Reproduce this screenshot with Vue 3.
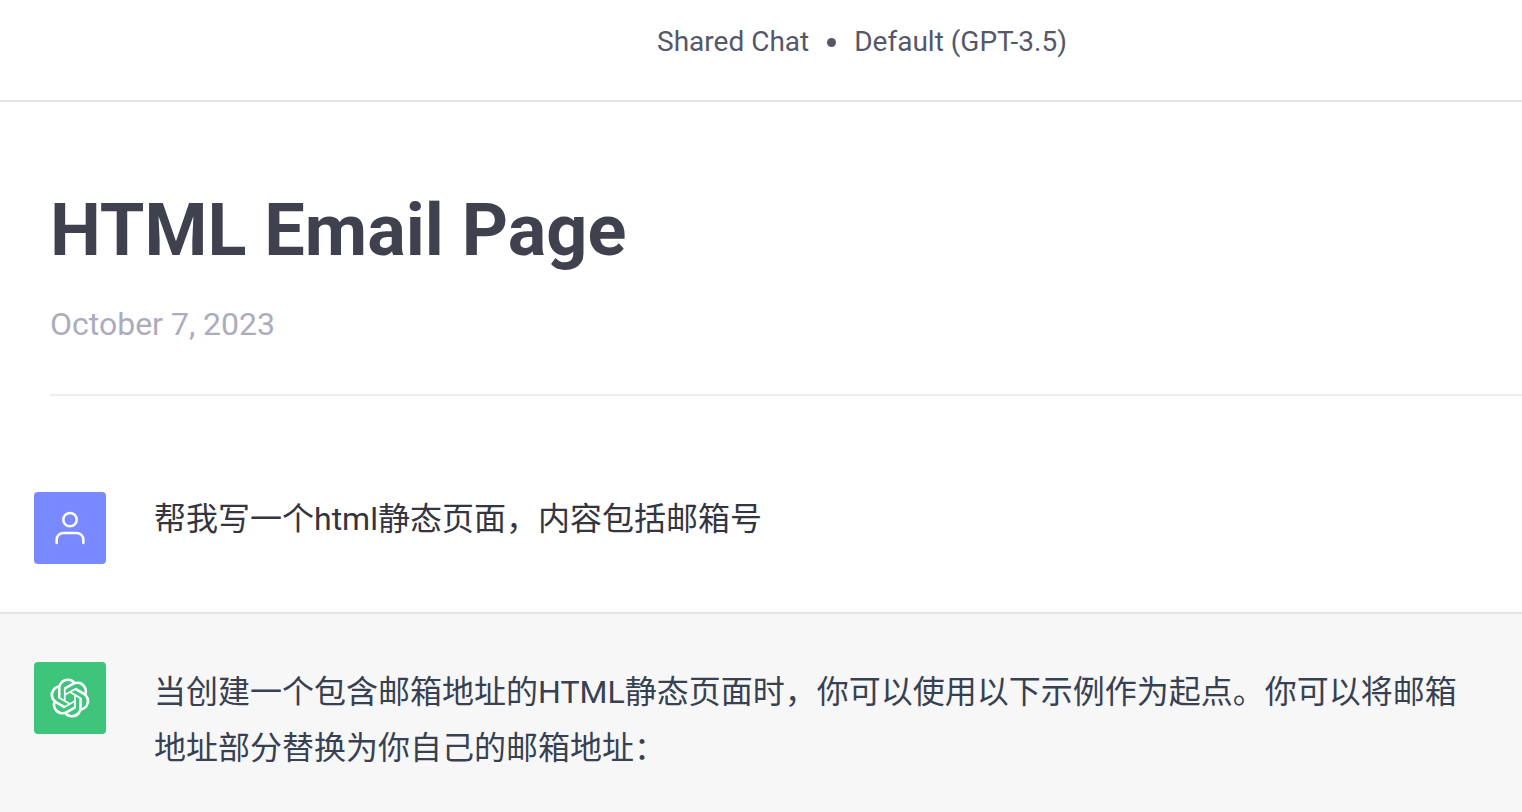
<script setup>
const title = 'HTML Email Page'
const date = 'October 7, 2023'
</script>

<template>
  <div class="page">
    <header class="topbar">
      <span>Shared Chat</span>
      <span class="dot"></span>
      <span>Default (GPT-3.5)</span>
    </header>
    <main>
      <section class="intro">
        <h1>{{ title }}</h1>
        <p class="date">{{ date }}</p>
      </section>
      <article class="message user">
        <div class="avatar person">
          <svg viewBox="0 0 24 24" width="40" height="40" fill="none" stroke="currentColor" stroke-width="1.5" stroke-linecap="round" stroke-linejoin="round">
            <path d="M20 21v-2a4 4 0 0 0-4-4H8a4 4 0 0 0-4 4v2" />
            <circle cx="12" cy="7" r="4" />
          </svg>
        </div>
        <p class="text">帮我写一个html静态页面，内容包括邮箱号</p>
      </article>
      <article class="message assistant">
        <div class="avatar bot">
          <svg viewBox="0 0 41 41" width="40" height="40" fill="currentColor">
            <path d="M37.532 16.87a9.963 9.963 0 0 0-.856-8.184 10.078 10.078 0 0 0-10.855-4.835A9.964 9.964 0 0 0 18.306.5a10.079 10.079 0 0 0-9.614 6.977 9.967 9.967 0 0 0-6.664 4.834 10.08 10.08 0 0 0 1.24 11.817 9.965 9.965 0 0 0 .856 8.185 10.079 10.079 0 0 0 10.855 4.835 9.965 9.965 0 0 0 7.516 3.35 10.078 10.078 0 0 0 9.617-6.981 9.967 9.967 0 0 0 6.663-4.834 10.079 10.079 0 0 0-1.243-11.813ZM22.498 37.886a7.474 7.474 0 0 1-4.799-1.735c.061-.033.168-.091.237-.134l7.964-4.6a1.294 1.294 0 0 0 .655-1.134V19.054l3.366 1.944a.12.12 0 0 1 .066.092v9.299a7.505 7.505 0 0 1-7.49 7.496ZM6.392 31.006a7.471 7.471 0 0 1-.894-5.023c.06.036.162.099.237.141l7.964 4.6a1.297 1.297 0 0 0 1.308 0l9.724-5.614v3.888a.12.12 0 0 1-.048.103l-8.051 4.649a7.504 7.504 0 0 1-10.24-2.744ZM4.297 13.62A7.469 7.469 0 0 1 8.2 10.333c0 .068-.004.19-.004.274v9.201a1.294 1.294 0 0 0 .654 1.132l9.723 5.614-3.366 1.944a.12.12 0 0 1-.114.01L7.04 23.856a7.504 7.504 0 0 1-2.743-10.237Zm27.658 6.437-9.724-5.615 3.367-1.943a.121.121 0 0 1 .113-.01l8.052 4.648a7.498 7.498 0 0 1-1.158 13.528v-9.476a1.293 1.293 0 0 0-.65-1.132Zm3.35-5.043c-.059-.037-.162-.099-.236-.141l-7.965-4.6a1.298 1.298 0 0 0-1.308 0l-9.723 5.614v-3.888a.12.12 0 0 1 .048-.103l8.05-4.645a7.497 7.497 0 0 1 11.135 7.763Zm-21.063 6.929-3.367-1.944a.12.12 0 0 1-.065-.092v-9.299a7.497 7.497 0 0 1 12.293-5.756 6.94 6.94 0 0 0-.236.134l-7.965 4.6a1.294 1.294 0 0 0-.654 1.132l-.006 11.225Zm1.829-3.943 4.33-2.501 4.332 2.5v5l-4.331 2.5-4.331-2.5V18Z" />
          </svg>
        </div>
        <p class="text">当创建一个包含邮箱地址的HTML静态页面时，你可以使用以下示例作为起点。你可以将邮箱地址部分替换为你自己的邮箱地址：</p>
      </article>
    </main>
  </div>
</template>

<style>
body {
  margin: 0;
  background: #fff;
}
</style>

<style scoped>
.page {
  min-height: 100vh;
  display: flex;
  flex-direction: column;
  font-family: Roboto, "Noto Sans CJK SC", sans-serif;
}
main {
  flex: 1;
  display: flex;
  flex-direction: column;
}
.topbar {
  padding: 24px 0 40px 202px;
  display: flex;
  align-items: center;
  justify-content: center;
  gap: 18px;
  border-bottom: 2px solid #e5e5e7;
  color: #565869;
  font-size: 28px;
  line-height: 36px;
}
.dot {
  width: 9px;
  height: 9px;
  border-radius: 50%;
  background: #565869;
}
.intro {
  margin-left: 50px;
  padding: 88px 0 50px;
  border-bottom: 2px solid #ececf1;
}
h1 {
  margin: 0;
  color: #40414f;
  font-size: 72px;
  line-height: 82px;
  font-weight: 700;
}
.date {
  margin: 32px 0 0;
  color: #acacbe;
  font-size: 32px;
  line-height: 40px;
}
.message {
  display: flex;
  align-items: flex-start;
  gap: 48px;
  padding: 48px 60px 48px 34px;
}
.user {
  padding-top: 96px;
  border-bottom: 2px solid #e5e5e7;
  color: #343541;
}
.assistant {
  flex: 1;
  background: #f7f7f8;
  color: #374151;
}
.avatar {
  flex: none;
  width: 72px;
  height: 72px;
  display: flex;
  align-items: center;
  justify-content: center;
  border-radius: 4px;
  color: #fff;
}
.person {
  background: #7989ff;
}
.bot {
  background: #3fc47b;
}
.text {
  flex: 1;
  margin: 0;
  font-size: 32px;
  line-height: 56px;
}
.user .text {
  line-height: 54px;
}
.assistant .text {
  padding-top: 2px;
}
</style>
